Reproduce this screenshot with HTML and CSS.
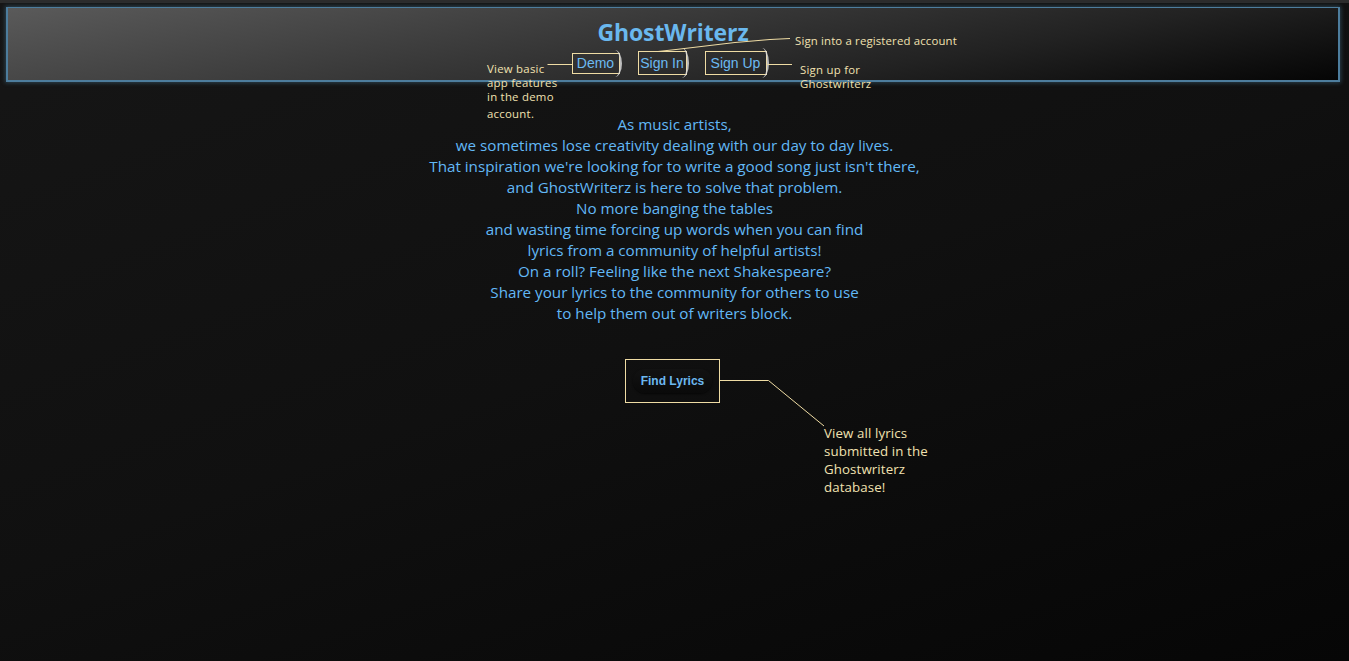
FILE: index.html
```html
<!DOCTYPE html>
<html>
<head>
<meta charset="utf-8">
<title>GhostWriterz</title>
<link rel="stylesheet" href="styles.css">
</head>
<body>
<div class="page">
  <header class="topbar">
    <h1 class="brand">GhostWriterz</h1>
    <nav class="nav">
      <span class="hl hl-demo"><button class="navbtn">Demo</button></span>
      <span class="hl hl-in"><button class="navbtn">Sign In</button></span>
      <span class="hl hl-up"><button class="navbtn">Sign Up</button></span>
    </nav>
  </header>

  <main class="intro">
    <p class="pitch">As music artists,<br>
    we sometimes lose creativity dealing with our day to day lives.<br>
    That inspiration we're looking for to write a good song just isn't there,<br>
    and GhostWriterz is here to solve that problem.<br>
    No more banging the tables<br>
    and wasting time forcing up words when you can find<br>
    lyrics from a community of helpful artists!<br>
    On a roll? Feeling like the next Shakespeare?<br>
    Share your lyrics to the community for others to use<br>
    to help them out of writers block.</p>
    <div class="find-wrap">
      <span class="hl hl-find"><button class="findbtn">Find Lyrics</button></span>
    </div>
  </main>

  <svg class="leaders" width="1349" height="661" viewBox="0 0 1349 661">
    <g stroke="#efdca4" stroke-width="1" fill="none">
      <polyline points="547.5,64.5 572.5,64.5"/>
      <polyline points="658,51.5 676,49.5 735,42.5 770,39.5 790,38.5"/>
      <polyline points="767.5,64.5 792,64.5"/>
      <polyline points="719.5,380.5 768.5,380.5 824,426"/>
    </g>
  </svg>

  <div class="note note-demo">View basic<br>app features<br>in the demo<br><span class="last">account.</span></div>
  <div class="note note-in">Sign into a registered account</div>
  <div class="note note-up">Sign up for<br>Ghostwriterz</div>
  <div class="note note-find">View all lyrics<br>submitted in the<br>Ghostwriterz<br>database!</div>
</div>
</body>
</html>
```
FILE: styles.css
```css
html, body {
  margin: 0;
  padding: 0;
  height: 100%;
}
body {
  background: linear-gradient(160deg, #161616 0%, #101010 50%, #060606 100%);
  font-family: "Open Sans", "Noto Sans", sans-serif;
  overflow: hidden;
}
.page {
  position: relative;
  width: 1349px;
  height: 661px;
  border-top: 3px solid #2c2c2c;
  box-sizing: border-box;
}
.topbar {
  margin: 4px 9px 0 6px;
  height: 72px;
  border: 1px solid #4d7d9d;
  border-bottom-width: 2px;
  border-left-width: 2px;
  border-right-width: 2px;
  box-shadow: 0 0 4px 1px rgba(70, 120, 150, 0.45);
  background: linear-gradient(170deg, #5a5a5a 0%, #3a3a3a 40%, #222 70%, #050505 100%);
  display: flex;
  flex-direction: column;
  align-items: center;
}
.brand {
  margin: 10px 0 0 0;
  font-family: "Open Sans", sans-serif;
  font-weight: 700;
  font-size: 23px;
  line-height: 28px;
  color: #6ab8ee;
  letter-spacing: -0.1px;
}
.nav {
  display: flex;
  gap: 18px;
  align-items: center;
  margin-top: 5px;
  margin-right: 8px;
}
.hl {
  position: relative;
  display: inline-flex;
  border: 1px solid #efdca4;
  box-sizing: border-box;
}
.hl-demo, .hl-in, .hl-up {
  height: 24px;
  align-items: center;
  justify-content: center;
}
.hl-demo { height: 21px; width: 48px; }
.hl-in { width: 49px; }
.hl-up { width: 62px; }
.hl-demo::after, .hl-in::after, .hl-up::after {
  content: "";
  position: absolute;
  right: -3px;
  top: -4px;
  bottom: -4px;
  width: 12px;
  border-right: 2px solid rgba(215, 215, 215, 0.85);
  border-radius: 0 50% 50% 0;
}
.navbtn {
  background: transparent;
  border: 0;
  padding: 0;
  font-family: "Liberation Sans", Arial, sans-serif;
  font-size: 14px;
  color: #6cbaf2;
  line-height: 20px;
}
.intro {
  display: flex;
  flex-direction: column;
  align-items: center;
}
.pitch {
  margin: 32px 0 0 0;
  text-align: center;
  font-family: "Open Sans", sans-serif;
  font-size: 15.2px;
  line-height: 21px;
  color: #62b8f6;
  letter-spacing: 0;
}
.find-wrap {
  margin-top: 35px;
  margin-right: 4px;
}
.hl-find {
  width: 95px;
  height: 44px;
  align-items: center;
  justify-content: center;
}
.findbtn {
  background: linear-gradient(#121212, #0a0a0a);
  border: 0;
  border-radius: 14px;
  padding: 5px 8px;
  font-family: "Liberation Sans", Arial, sans-serif;
  font-weight: 700;
  font-size: 12px;
  color: #6cb8f0;
  box-shadow: 0 1px 2px rgba(0,0,0,0.6);
}
.leaders {
  position: absolute;
  left: 0;
  top: -3px;
  pointer-events: none;
}
.note {
  position: absolute;
  color: #f1e1b0;
  font-family: "Open Sans", sans-serif;
  font-size: 11.4px;
  line-height: 14px;
  letter-spacing: 0.25px;
}
.note-demo { left: 487px; top: 59px; }
.note-demo .last { display: inline-block; margin-top: 3px; }
.note-in { left: 795px; top: 31px; white-space: nowrap; letter-spacing: 0.15px; }
.note-up { left: 800px; top: 60px; }
.note-find {
  left: 824px;
  top: 421px;
  font-size: 13.3px;
  line-height: 18px;
  letter-spacing: 0.1px;
}
```
